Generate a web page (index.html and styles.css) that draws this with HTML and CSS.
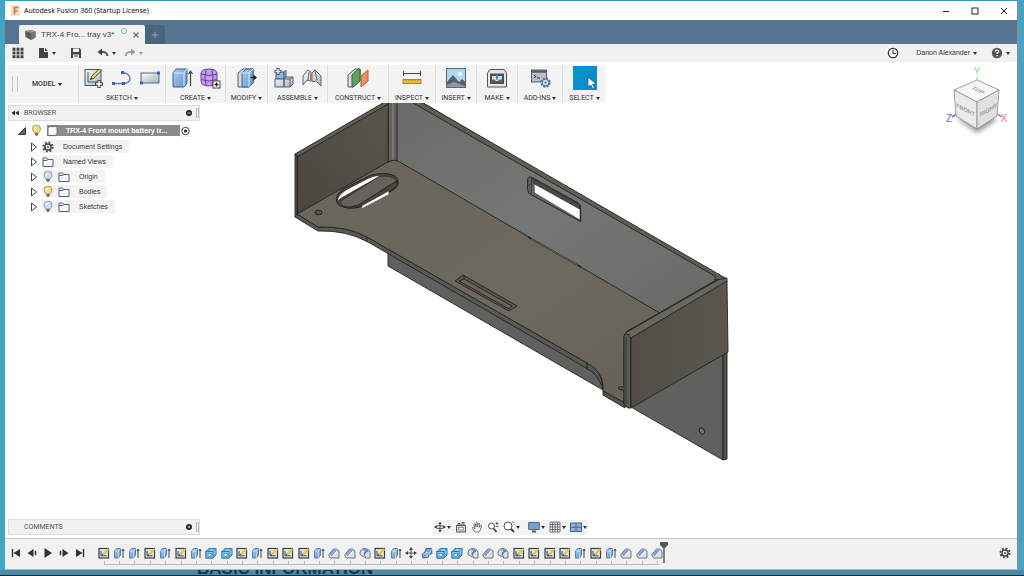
FILE: index.html
```html
<!DOCTYPE html>
<html lang="en">
<head>
<meta charset="utf-8">
<title>Autodesk Fusion 360 (Startup License)</title>
<link rel="stylesheet" href="styles.css">
</head>
<body>
<svg class="defs" aria-hidden="true">
  <defs>
    <linearGradient id="blue" x1="0" y1="0" x2="1" y2="1"><stop offset="0" stop-color="#a9d0f0"/><stop offset="1" stop-color="#6295cb"/></linearGradient>
    <linearGradient id="grey" x1="0" y1="0" x2="1" y2="1"><stop offset="0" stop-color="#fafafa"/><stop offset="1" stop-color="#a9b1bd"/></linearGradient>
    <symbol id="t-sketch" viewBox="0 0 12 12"><rect x="1" y="1.500" width="9.500" height="9.500" fill="#dfe5ee" stroke="#36404f" stroke-width="1.200"/><path d="M3 8.800h5.500M3 8.800V4" stroke="#36404f" fill="none"/><path d="M4.500 7.800 10.500 2" stroke="#e9c53c" stroke-width="2.400"/><path d="m3.800 8.600 1.600-.5-1-1z" fill="#222"/></symbol>
    <symbol id="t-extrude" viewBox="0 0 12 12"><path d="M1.500 4 3.500 1.500H7.500V8L5.500 11h-4z" fill="url(#blue)" stroke="#48688d" stroke-width=".8"/><path d="M1.500 4h4v7M5.500 4l2-2.500" fill="none" stroke="#dcecfa" stroke-width=".7"/><path d="M10 11V2.500M8.800 4 10 2l1.200 2" fill="none" stroke="#444"/></symbol>
    <symbol id="t-shell" viewBox="0 0 12 12"><path d="M4 1.500h7v6.500L8 11H1V4.500z" fill="#8fcdee" stroke="#287da8" stroke-linejoin="round"/><path d="M4 1.500V4M8 8h3M8 4.500l3-3" fill="none" stroke="#287da8" stroke-width=".8"/><rect x="1" y="4.500" width="7" height="6.500" fill="#8fcdee" stroke="#287da8"/><rect x="3" y="6.300" width="3.200" height="3" fill="#f4f9fc" stroke="#287da8" stroke-width=".7"/></symbol>
    <symbol id="t-chamfer" viewBox="0 0 12 12"><path d="M1 7.500 5.500 2q3-1 5.500 2v7H3L1 9.500z" fill="#dde2ea" stroke="#5e6a7a" stroke-width=".9"/><path d="M1.300 7.500 5.800 2.200q2-.4 3.200 1.300L3.800 9.500z" fill="#86a3c9"/><path d="m3.800 9.800 5.200-6" stroke="#fff" stroke-width=".8"/></symbol>
    <symbol id="t-fillet" viewBox="0 0 12 12"><path d="M1 6Q1.500 1.500 6 1.500q4 0 5 4V11H6.500V9.500L5 10 1 7.500z" fill="#dde2ea" stroke="#5e6a7a" stroke-width=".9"/><path d="M3 3.500Q5 1.500 7.500 2.500 9.500 3.500 9.500 5 6.500 4.500 6 9L4.500 8Q4.500 4.500 7 4 5 3 3 3.500z" fill="#5a7fb5"/></symbol>
    <symbol id="t-combine" viewBox="0 0 12 12"><path d="M5 1.500h5.500l.5 5-3 1.500-1 2.500-5 .5L1 7l3-2z" fill="#79a6d8" stroke="#3f628e"/><path d="M4.500 5.500h4L11 2M8.500 5.500V8M1.500 7H6v3.500" fill="none" stroke="#d2e5f8" stroke-width=".7"/></symbol>
    <symbol id="t-move" viewBox="0 0 12 12"><path d="M6 2v8M2 6h8" stroke="#555"/><path d="m6 0 2 3H4zM6 12l2-3H4zM0 6l3-2v4zM12 6 9 4v4z" fill="#444"/></symbol>
    <symbol id="bulb" viewBox="0 0 10 12"><path d="M3 8Q1 6 1 4a4 4 0 0 1 8 0Q9 6 7 8z" fill="currentColor" stroke="#8b8c83" stroke-width=".8"/><path d="M3.500 8.500h3v1h-3zM4 10.500h2" fill="#777" stroke="#666" stroke-width=".8"/><path d="M3 4q0-1.500 1.500-2" fill="none" stroke="#fff"/></symbol>
    <symbol id="folder" viewBox="0 0 12 12"><path d="M1 10.500V2h3.500l1 1.500H11v7zM1 4.500h3.500l1.500-1" fill="#f4f6f9" stroke="#53647c"/></symbol>
    <symbol id="arrow" viewBox="0 0 8 10"><path d="M1.500 1 6.500 5l-5 4z" fill="#fff" stroke="#444"/></symbol>
    <symbol id="gear" viewBox="0 0 12 12"><circle cx="6" cy="6" r="4.600" fill="none" stroke="#444" stroke-width="1.900" stroke-dasharray="1.810 1.800"/><circle cx="6" cy="6" r="3.100" fill="none" stroke="#444" stroke-width="1.500"/><circle cx="6" cy="6" r="1" fill="#444"/></symbol>
  </defs>
</svg>

<div class="window">
  <header class="titlebar">
    <svg class="i12" viewBox="0 0 12 12"><rect x="1" y="0" width="9" height="11" rx="1" fill="#f9e0ca"/><path d="M4.500 9.500V2.500H8.500M4.500 6H7.500" fill="none" stroke="#c47a38" stroke-width="1.600"/></svg>
    <h1>Autodesk Fusion 360 (Startup License)</h1>
    <button class="wbtn" aria-label="Minimize"><svg viewBox="0 0 10 10"><path d="M2 5.500h6" stroke="#222"/></svg></button>
    <button class="wbtn" aria-label="Maximize"><svg viewBox="0 0 10 10"><rect x="2" y="2" width="6" height="6" fill="none" stroke="#222"/></svg></button>
    <button class="wbtn" aria-label="Close"><svg viewBox="0 0 10 10"><path d="m2 2 6 6M8 2 2 8" stroke="#222"/></svg></button>
  </header>

  <nav class="tabs" aria-label="Documents">
    <div class="tab">
      <svg class="i12" viewBox="0 0 12 12"><path d="m1 2 6-1 4.500 1.500v6L7 11 1.500 8z" fill="#5d5d5d"/><path d="m1 2 6-1 4.500 1.500L7 4z" fill="#999"/><path d="M7 4v7l4.500-2.500v-6z" fill="#777"/></svg>
      <span class="tabname">TRX-4 Fro... tray v3*</span>
      <svg class="sync" viewBox="0 0 8 8"><circle cx="4" cy="4" r="2.500" fill="none" stroke="#72c7c0"/></svg>
      <button class="x" aria-label="Close tab"><svg viewBox="0 0 8 8"><path d="m1.500 1.500 5 5M6.500 1.500l-5 5" stroke="#777" stroke-width="1.400"/></svg></button>
    </div>
    <button class="newtab" aria-label="New tab"><svg viewBox="0 0 8 8"><path d="M4 .5v7M.5 4h7" stroke="#8fa1b3"/></svg></button>
  </nav>

  <div class="quick">
    <button aria-label="Data panel"><svg class="i12" viewBox="0 0 12 12"><path d="M.5 2.300h11M.5 6h11M.5 9.700h11" stroke="#444" stroke-width="3" stroke-dasharray="3 1"/></svg></button>
    <button class="caret file" aria-label="File"><svg class="i12" viewBox="0 0 12 12"><path d="M2 1h5v4h4v6H2zM8 1l3 3H8z" fill="#444"/></svg></button>
    <button class="save" aria-label="Save"><svg class="i12" viewBox="0 0 12 12"><path d="M1 1h8.500L11 2.500V11H1z" fill="#444"/><path d="M3 1.500h6v3.500H3zM3 7.500h6V11H3z" fill="#f1f1f1"/><path d="M4 9h4" stroke="#444"/></svg></button>
    <button class="caret undo" aria-label="Undo"><svg class="i12" viewBox="0 0 12 12"><path d="M3 5q7-1 7.500 4" fill="none" stroke="#444" stroke-width="1.800"/><path d="M.5 5 5 1.500v7z" fill="#444"/></svg></button>
    <button class="caret redo" aria-label="Redo"><svg class="i12" viewBox="0 0 12 12"><path d="M9 5Q2 4 1.500 9" fill="none" stroke="#999" stroke-width="1.800"/><path d="M11.500 5 7 1.500v7z" fill="#999"/></svg></button>
    <span class="grow"></span>
    <button class="clock" aria-label="Job status"><svg class="i12" viewBox="0 0 12 12"><circle cx="6" cy="6" r="4.700" fill="none" stroke="#333" stroke-width="1.200"/><path d="M6 3v3.500h2.800" fill="none" stroke="#333"/></svg></button>
    <button class="caret user">Danon Alexander</button>
    <button class="caret help" aria-label="Help"><svg class="i12" viewBox="0 0 12 12"><circle cx="6" cy="6" r="5.200" fill="#555"/><path d="M4.300 4.700Q4.300 3 6 3t1.700 1.500Q7.700 5.500 6 6v1M6 8v1.200" fill="none" stroke="#fff" stroke-width="1.200"/></svg></button>
  </div>

  <main class="stage">
    <svg class="model" viewBox="288 100 448 368" role="img" aria-label="Battery tray model">
      <defs>
        <linearGradient id="wall" x1="0" y1="0" x2="1" y2="1"><stop offset="0" stop-color="#6a6b67"/><stop offset=".5" stop-color="#747874"/><stop offset="1" stop-color="#676a65"/></linearGradient>
        <linearGradient id="floor" x1="0" y1="0" x2="1" y2="1"><stop offset="0" stop-color="#69655b"/><stop offset=".6" stop-color="#6e695e"/><stop offset="1" stop-color="#666157"/></linearGradient>
        <linearGradient id="side" x1="0" y1="1" x2="1" y2="0"><stop offset="0" stop-color="#494640"/><stop offset="1" stop-color="#5a564d"/></linearGradient>
        <linearGradient id="side2" x1="0" y1="0" x2="1" y2="0"><stop offset="0" stop-color="#514e47"/><stop offset="1" stop-color="#59574f"/></linearGradient>
      </defs>
      <g stroke="#23231f" stroke-width=".9" stroke-linejoin="round">
        <path d="M388 250v16l215 124v-15z" fill="#5f615d"/>
        <path d="m631 407 92-53v106z" fill="#5f615c"/>
        <path d="m723 355 4-3v107l-4 1z" fill="#50514d"/>
        <path d="M388 100h30L716 276v5l-56 33L388 162z" fill="url(#wall)"/>
        <path d="M408 100h10L727 279l-12 1q2-3-2-5z" fill="#625d54"/>
        <path d="M388 100h9v61l-4-1-5 2z" fill="#62615b"/>
        <path d="M393 100v60" stroke="#777770" stroke-width="2"/>
        <path d="m297 155 91-53v60l-91 53z" fill="url(#side)"/>
        <path d="m295 154 93-54v4l-91 53z" fill="#625f57"/>
        <path d="M295 154l2 1v60l-2 2z" fill="#5a5b57"/>
        <path d="m295 217 2-3 21 13q29-1 49 10l220 126 1 6-220-127q-22-12-50-11z" fill="#595a56"/>
        <path d="m297 214 91-52q6-3 10-1l262 152-33 18-3 5v67l-21-12v-5q-1-15-16-23L367 237q-20-11-49-10z" fill="url(#floor)"/>
        <path d="M587 363v6q9 3 16 19-1-18-16-25z" fill="#555650"/>
        <path d="m603 391 22 12v5l-22-13z" fill="#55554f"/>
        <path d="M367 237v5" fill="none"/>
        <path d="m624 335 4-4 88-51 11-2v4l-96 56z" fill="#69665e"/>
        <path d="m627 332 91-52" fill="none"/>
        <path d="M624 336q1-3 4-2l3 4v70h-3l-4-3z" fill="#595954"/>
        <path d="M626 337v70" fill="none" stroke-width=".5"/>
        <path d="m631 338 96-57 1 71-97 56z" fill="url(#side2)"/>
        <path d="m463 275 54 31-8 5-54-30z" fill="#5b574e"/>
        <path d="m464 279 48 27-3 3-50-28zM464 275v4" fill="#69645a"/>
        <path d="m528 237 53 30" fill="none" stroke-width="1.500"/>
        <path d="m531 238.500 47 27" stroke="#777970" stroke-width=".8"/>
        <ellipse cx="318.500" cy="212.500" rx="3.500" ry="2.300" fill="#57534b"/>
        <path d="M624 387q-6-1-6 1t6 2" fill="#57534b"/>
        <ellipse cx="702" cy="431" rx="2.300" ry="3.300" transform="rotate(-25 702 431)" fill="#71746f"/>
      </g>
      <g transform="translate(280 95) scale(.3333)" stroke="#23231f" stroke-width="3" stroke-linejoin="round">
        <path d="M170 320q-5-20 20-38l75-38c25-12 80-12 87 8q10 20-16 35l-85 44c-28 15-73 10-81-11z" fill="#47453f"/>
        <path d="M180 320l116-75q40-6 54 12l-115 73-25 6q-25 0-30-16z" fill="#68635a" stroke-width="2"/>
        <path d="M174 316q0-14 26-31l65-34q15-8 34-9l-17 10-99 56z" fill="#fff" stroke="none"/>
        <path d="m214 336 26-8 112-70v14l-20 15-84 44q-20 8-34 5z" fill="#484741" stroke-width="2"/>
        <path d="m246 333 80-44v9l-79 41z" fill="#fff" stroke="none"/>
      </g>
      <g transform="translate(500 160) scale(.3333)" stroke="#23231f" stroke-width="3" stroke-linejoin="round">
        <path d="M83 58q3-12 14-5l138 76q7 4 7 14v42L92 103q-9-3-9-14z" fill="#62655f"/>
        <path d="M97 56 240 135v13L103 72z" fill="#484a46" stroke-width="1.500"/>
        <path d="M103 72 240 148v32L103 98z" fill="#fff" stroke-width="1.500"/>
        <path d="M94 54v47M83 77l11-5" fill="none" stroke-width="2"/>
      </g>
    </svg>

    <svg class="cube" viewBox="944 64 68 76" role="img" aria-label="View cube">
      <defs><filter id="soft"><feGaussianBlur stdDeviation="2.500"/></filter></defs>
      <path d="m958 119 19 14 20-13-20-15z" fill="#999" filter="url(#soft)"/>
      <path d="M977 81v-4" stroke="#7dd87d"/><path d="m957 114-5 3" stroke="#6670cc" stroke-width="1.500"/><path d="m997 114 5 3" stroke="#e08080" stroke-width="1.500"/>
      <g stroke="#8c8c8c" stroke-width=".8" stroke-linejoin="round"><path d="m954 90 23-10 22 10-22 12z" fill="#f6f6f6"/><path d="m954 90 23 12v27l-21-13z" fill="#ebebeb"/><path d="m977 102 22-12-2 26-20 13z" fill="#e0e0e0"/></g>
      <g class="cubetext" text-anchor="middle"><text transform="matrix(.9 .45 -.9 .45 976 91)">TOP</text><text transform="matrix(.9 .45 0 1 965.500 112)">FRONT</text><text transform="matrix(.9 -.5 0 1 988.500 112)">RIGHT</text></g>
      <g class="axis" text-anchor="middle"><text x="977" y="75" fill="#8bdc8b">Y</text><text x="949" y="122" fill="#6068c8">Z</text><text x="1004" y="122" fill="#e07878">X</text></g>
    </svg>

    <div class="toolbar" role="toolbar" aria-label="Model tools">
      <div class="modelsel"><button class="caret">MODEL</button></div>
      <div class="group w-sketch"><div class="icons">
        <svg class="i22" viewBox="0 0 22 22"><rect x="2" y="2.500" width="16" height="16" fill="url(#grey)" stroke="#4c5869"/><path d="M5 5v10h9" fill="none" stroke="#4c5869"/><path d="m9 11 8-8" stroke="#5b5223" stroke-width="3.600"/><path d="m9 11 8-8" stroke="#f3d660" stroke-width="2.200"/><path d="m7 13 1-3 2 2z" fill="#222"/><path d="M16 13v8M12 17h8" stroke="#444" stroke-width="3.400"/><path d="M16 14v6M13 17h6" stroke="#fff" stroke-width="1.600"/></svg>
        <svg class="i22" viewBox="0 0 22 22"><path d="M2 16.500h11M13 16.500q6-1 6-5 0-5-8-6" fill="none" stroke="#657ba0" stroke-width="1.400"/><path d="M1 15h3v3H1zM11 15h3v3h-3zM10 4h3v3h-3z" fill="#3d60c0"/></svg>
        <svg class="i22" viewBox="0 0 22 22"><rect x="2" y="6" width="18" height="10" fill="url(#grey)" stroke="#5d6c80"/><path d="M1 14.500h3v3H1zM18 4.500h3v3h-3z" fill="#3d60c0"/></svg>
      </div><button class="caret">SKETCH</button></div>
      <div class="group w-mid"><div class="icons">
        <svg class="i22" viewBox="0 0 22 22"><path d="m2 6 3-4h11v14l-3 4H2z" fill="url(#blue)" stroke="#3f6185"/><path d="M2.500 6H13v13.500M13 6l3-4" fill="none" stroke="#d9ecfb"/><path d="M19.500 19V5M17.500 7l2-3 2 3" fill="none" stroke="#444" stroke-width="1.200"/></svg>
        <svg class="i22" viewBox="0 0 22 22"><path d="M2 6q1-4 8-4 8 0 8 5v6q0 6-8 6-8 0-8-5z" fill="#c39be8" stroke="#6c3da0"/><path d="M7 2.500Q5 10 7 18.500M13 2.500q2 7 0 16M2 7q8 3 16 0M2 12.500q8 3 16 0" fill="none" stroke="#6c3da0"/><rect x="14" y="14" width="7" height="7" fill="#fff" stroke="#444"/><path d="M15.500 17.500h4M17.500 15.500v4" stroke="#222" stroke-width="1.400"/></svg>
      </div><button class="caret">CREATE</button></div>
      <div class="group w-mod"><div class="icons">
        <svg class="i22" viewBox="0 0 22 22"><path d="m2 6 5-4h10v14l-4 4H2z" fill="#d8dde5" stroke="#4e6076"/><path d="m6 6 4-4h7v14l-4 4H6z" fill="url(#blue)" stroke="#3f6185"/><path d="M6 6h7v14M13 6l4-4" fill="none" stroke="#d9ecfb"/><path d="M14.500 10.500h5" stroke="#222" stroke-width="1.500"/><path d="m21 10.500-3.500-3v6z" fill="#222"/></svg>
      </div><button class="caret">MODIFY</button></div>
      <div class="group w-mid"><div class="icons">
        <svg class="i22" viewBox="0 0 22 22"><path d="M3 5h8v7H3z" fill="#8db8e2" stroke="#48688d"/><path d="m11 5 2-2v8l-2 1z" fill="#7faedd" stroke="#48688d"/><path d="M2 12h9v8H2zM11 12l2-2h7v7l-3 3h-6z" fill="url(#grey)" stroke="#4e6076"/><path d="M11 12h6v8M17 12l3-2" fill="none" stroke="#4e6076"/><path d="M5 1v7M1.500 4.500h7" stroke="#446" stroke-width="3"/><path d="M5 2v5M2.500 4.500h5" stroke="#fff" stroke-width="1.400"/></svg>
        <svg class="i22" viewBox="0 0 22 22"><path d="M2 18V9l5-6 3 2v9l-4-1zM20 19V9l-6-6-3 3v9l4-1z" fill="url(#grey)" stroke="#596779"/><path d="m8 5-1 8M14 4l2 9" stroke="#596779"/><path d="M10 7v7" stroke="#d96342" stroke-width="1.600"/></svg>
      </div><button class="caret">ASSEMBLE</button></div>
      <div class="group w-con"><div class="icons">
        <svg class="i22" viewBox="0 0 22 22"><path d="M1 20V8l7-6h5v12l-7 6z" fill="#d7dfdc" stroke="#4e6076"/><path d="M5 20V8l6-6h2v12l-7 6z" fill="#5ca45f" stroke="#31653a"/><path d="M14 20V9l7-6v11z" fill="#ed9362" stroke="#b45c35"/></svg>
      </div><button class="caret">CONSTRUCT</button></div>
      <div class="group w-ins"><div class="icons">
        <svg class="i22" viewBox="0 0 22 22"><path d="M2 6.500h18M2.500 4v5M19.500 4v5" stroke="#444"/><rect x="2" y="12.500" width="18" height="4" fill="#e8b83f" stroke="#b08420"/><path d="M5 13v1M8 13v1M11 13v1M14 13v1M17 13v1" stroke="#8c6510" stroke-width=".7"/></svg>
      </div><button class="caret">INSPECT</button></div>
      <div class="group w-small"><div class="icons">
        <svg class="i22" viewBox="0 0 22 22"><rect x="1.500" y="1.500" width="19" height="19" fill="#b0d5ef" stroke="#586675"/><circle cx="15" cy="7" r="2" fill="#fff"/><path d="M2 15 8 8l6 7 3-3 3.500 3v5H2z" fill="#58606b"/><path d="m2 18 7-3 11 4v1H2z" fill="#8e98a3"/></svg>
      </div><button class="caret">INSERT</button></div>
      <div class="group w-small"><div class="icons">
        <svg class="i22" viewBox="0 0 22 22"><path d="M1.500 6 4 2.500h14L20.500 6v14h-19z" fill="#e6e6e6" stroke="#555"/><path d="M4 6.500h14v10.500H4z" fill="#4d5053"/><path d="M6 9h10v6H6z" fill="#cfdce4"/><path d="M6 15v-2.500h2.500L10 14h2l1.500-1.500H16V15z" fill="#5e646a"/><path d="M11 7.500v5" stroke="#338cc5" stroke-width="2"/></svg>
      </div><button class="caret">MAKE</button></div>
      <div class="group w-add"><div class="icons">
        <svg class="i22" viewBox="0 0 22 22"><rect x="2.500" y="3" width="15" height="12" fill="#b8bfca" stroke="#555f6c"/><path d="M2.500 4.500h15" stroke="#555f6c" stroke-width="2.500"/><path d="m5 8 2 1.500L5 11M8 11h3" fill="none" stroke="#333"/><circle cx="16.500" cy="15.500" r="4.200" fill="#dce5f3" stroke="#4f6996" stroke-width="2" stroke-dasharray="2 1.300"/><circle cx="16.500" cy="15.500" r="3.400" fill="#cfdbee" stroke="#4f6996"/><circle cx="16.500" cy="15.500" r="1" fill="#4f6996"/></svg>
      </div><button class="caret">ADD-INS</button></div>
      <div class="group w-sel"><div class="icons">
        <svg class="select" viewBox="0 0 24 24"><path d="M0 0h24v24H0z" fill="#078fd2"/><path d="M2 4h14v8H2z" fill="none" stroke="#209596"/><path d="m15 11 8 7-3.500.3 2 3.200-2 1-1.700-3.500L15 21z" fill="#fff" stroke="#35586d" stroke-width=".8"/></svg>
      </div><button class="caret">SELECT</button></div>
    </div>

    <section class="browser">
      <div class="panelhead"><svg viewBox="0 0 8 8"><path d="M4 1.500v5L.5 4zM7.800 1.500v5L4.300 4z" fill="#222"/></svg><h2>BROWSER</h2><button class="dot" aria-label="Collapse browser"><svg viewBox="0 0 8 8"><circle cx="4" cy="4" r="3" fill="#222"/><path d="M2.500 4h3" stroke="#ccc"/></svg></button><i class="grip"></i></div>
      <ul class="tree">
        <li class="root"><svg class="tri" viewBox="0 0 8 8"><path d="M7.500.5v7h-7z" fill="#666" stroke="#333"/></svg><svg class="i12 on" aria-hidden="true"><use href="#bulb"/></svg><span class="rootname"><svg class="i12" viewBox="0 0 12 12"><path d="m1 3 2-2h8v8l-2 2H1z" fill="#eee" stroke="#666"/><path d="M3 3h6v6H3z" fill="#fff"/></svg><b>TRX-4 Front mount battery tr...</b></span><svg class="i12 active" viewBox="0 0 12 12"><circle cx="6" cy="6" r="4" fill="#fff" stroke="#333"/><circle cx="6" cy="6" r="1.700" fill="#222"/></svg></li>
        <li><svg class="arr"><use href="#arrow"/></svg><span class="node"><svg class="i12"><use href="#gear"/></svg><span>Document Settings</span></span></li>
        <li><svg class="arr"><use href="#arrow"/></svg><span class="node"><svg class="i12"><use href="#folder"/></svg><span>Named Views</span></span></li>
        <li><svg class="arr"><use href="#arrow"/></svg><span class="node"><svg class="i12 off"><use href="#bulb"/></svg><svg class="i12"><use href="#folder"/></svg><span>Origin</span></span></li>
        <li><svg class="arr"><use href="#arrow"/></svg><span class="node"><svg class="i12 on"><use href="#bulb"/></svg><svg class="i12"><use href="#folder"/></svg><span>Bodies</span></span></li>
        <li><svg class="arr"><use href="#arrow"/></svg><span class="node"><svg class="i12 off"><use href="#bulb"/></svg><svg class="i12"><use href="#folder"/></svg><span>Sketches</span></span></li>
      </ul>
    </section>

    <div class="bottomrow">
      <div class="panelhead comments"><h2>COMMENTS</h2><button class="dot" aria-label="Add comment"><svg viewBox="0 0 8 8"><circle cx="4" cy="4" r="3" fill="#222"/><path d="M2.800 4h2.400M4 2.800v2.400" stroke="#ccc"/></svg></button><i class="grip"></i></div>
      <div class="navbar" role="toolbar" aria-label="Navigation">
        <button class="caret" aria-label="Orbit"><svg class="i12" viewBox="0 0 12 12"><path d="M6 2v8.500" stroke="#444"/><path d="M1 6q5 3.500 10 0M1.500 5.500q4.500-2 9 0" fill="none" stroke="#444" stroke-width=".9"/><path d="m6 .5 1.700 2.500H4.300zM6 11.500 7.700 9H4.300zM0 6l3-1.800v3.500zM12 6 9 4.200v3.500z" fill="#444"/></svg></button>
        <button aria-label="Look at"><svg class="i12" viewBox="0 0 12 12"><path d="M1.500 4.500h9V11h-9zM3 4V2.500h2V4M7 4V1.500h2V4" fill="#ddd" stroke="#555"/><path d="M3.500 6.500h5V9h-5z" fill="#fff" stroke="#666" stroke-width=".7"/></svg></button>
        <button aria-label="Pan"><svg class="i12" viewBox="0 0 12 12"><path d="M4 11 1.500 7.500Q1 6 2.500 6.500L4 8 3 3.500q0-1.500 1.200-.5L5 6V2q.7-1.500 1.400 0v4L7.500 2.500q1-1 1.200.3L8.300 6.500l1.300-2q1.200-.5 1 .8L9 9.500 8 11z" fill="#fff" stroke="#555" stroke-width=".8"/></svg></button>
        <button aria-label="Zoom"><svg class="i12" viewBox="0 0 12 12"><circle cx="4.500" cy="5" r="3" fill="#fff" stroke="#555"/><path d="m6.500 7.500 3 3.500" stroke="#444" stroke-width="1.800"/><path d="M8.500 2.500h3M10 1v3M8.500 5.500h3" stroke="#444" stroke-width=".8"/></svg></button>
        <button class="caret" aria-label="Fit"><svg class="i12" viewBox="0 0 12 12"><circle cx="5" cy="5" r="4" fill="#fff" stroke="#555"/><path d="m8 8 3 3" stroke="#444" stroke-width="2"/><path d="M9 1h2v4" fill="none" stroke="#777" stroke-dasharray="1"/></svg></button>
        <button class="caret gap" aria-label="Display settings"><svg class="i12" viewBox="0 0 12 12"><path d="M.7 1.500h10.600v7H.7z" fill="#7e9fc9" stroke="#536780"/><path d="M4 10.500h4" stroke="#555" stroke-width="2"/></svg></button>
        <button class="caret" aria-label="Grid"><svg class="i12" viewBox="0 0 12 12"><path d="M1 1h10v10H1zM3.500 1v10M6 1v10M8.500 1v10M1 3.500h10M1 6h10M1 8.500h10" fill="#eee" stroke="#59606c" stroke-width=".8"/></svg></button>
        <button class="caret" aria-label="Viewports"><svg class="i12" viewBox="0 0 12 12"><path d="M.5 2h11v8.500H.5zM6 2v8.500M.5 6.200h11" fill="#91b1dc" stroke="#445f87"/></svg></button>
      </div>
    </div>
  </main>

  <footer class="timeline">
    <div class="play">
      <button aria-label="First"><svg viewBox="0 0 10 10"><path d="M1.500 1v8" stroke="#333" stroke-width="1.400"/><path d="M9 1v8L2.500 5z" fill="#333"/></svg></button>
      <button aria-label="Step back"><svg viewBox="0 0 10 10"><path d="M6.500 1v8L.5 5z" fill="#333"/><path d="M8.500 3v4" stroke="#333" stroke-width="1.500"/></svg></button>
      <button aria-label="Play"><svg viewBox="0 0 10 10"><path d="M1.500 0v10l7.500-5z" fill="#333"/></svg></button>
      <button aria-label="Step forward"><svg viewBox="0 0 10 10"><path d="M3.500 1v8l6-4z" fill="#333"/><path d="M1.500 3v4" stroke="#333" stroke-width="1.500"/></svg></button>
      <button aria-label="Last"><svg viewBox="0 0 10 10"><path d="M8.500 1v8" stroke="#333" stroke-width="1.400"/><path d="M1 1v8l6.500-4z" fill="#333"/></svg></button>
    </div>
    <ol class="features" id="features"></ol>
    <svg class="marker" viewBox="0 0 8 22"><path d="M0 0h8v3L5 6H3L0 3z" fill="#555"/><path d="M4 5v16" stroke="#555" stroke-width="1.400"/></svg>
    <span class="grow"></span>
    <button class="settings" aria-label="Timeline settings"><svg class="i12"><use href="#gear"/></svg></button>
  </footer>
</div>
<div class="behind"><span>BASIC INFORMATION</span></div>
<script src="timeline.js"></script>
</body>
</html>
```

FILE: timeline.js
```js
const features = [
  'sketch', 'extrude', 'extrude', 'sketch', 'extrude', 'sketch', 'extrude',
  'shell', 'shell', 'sketch', 'extrude', 'sketch', 'sketch', 'sketch',
  'extrude', 'chamfer', 'chamfer', 'fillet', 'sketch', 'extrude', 'move',
  'combine', 'shell', 'shell', 'fillet', 'chamfer', 'fillet', 'sketch',
  'sketch', 'sketch', 'sketch', 'extrude', 'sketch', 'extrude', 'chamfer',
  'chamfer', 'chamfer'
];
document.getElementById('features').innerHTML = features
  .map(kind => `<li><svg class="i12" role="img" aria-label="${kind}"><use href="#t-${kind}"/></svg></li>`)
  .join('');
```

FILE: styles.css
```css
* { box-sizing: border-box; }
body {
  margin: 0;
  height: 100vh;
  display: flex;
  flex-direction: column;
  overflow: hidden;
  background: #43a5c1;
  color: #333;
  font: 7px/10px Roboto, "Liberation Sans", sans-serif;
}
button {
  display: flex;
  align-items: center;
  gap: 2px;
  margin: 0;
  padding: 0;
  border: 0;
  background: none;
  color: inherit;
  font: inherit;
}
svg { display: block; flex: none; overflow: visible; }
h1, h2, ul, ol { margin: 0; padding: 0; font: inherit; list-style: none; }
.defs { position: absolute; width: 0; height: 0; }
.i12 { width: 12px; height: 12px; }
.i22 { width: 22px; height: 22px; }
.grow { flex: 1; }
.caret::after {
  content: "";
  border: 2px solid transparent;
  border-top: 3px solid #333;
  border-bottom: 0;
}

.window {
  flex: 1;
  min-height: 0;
  display: flex;
  flex-direction: column;
  margin: 0 5px;
  border-top: 1px solid #379bb8;
  border-right: 2px solid #7294ad;
  border-bottom: 1px solid #9dbdcd;
  background: #fff;
}
.titlebar {
  display: flex;
  align-items: center;
  height: 19px;
  padding: 0 0 0 5px;
  gap: 2px;
}
.titlebar h1 { flex: 1; color: #111; font: 7px/12px "Noto Sans", "Open Sans", sans-serif; }
.wbtn { justify-content: center; width: 27px; }
.wbtn svg { width: 10px; height: 10px; }

.tabs {
  display: flex;
  align-items: flex-end;
  height: 24px;
  padding-left: 14px;
  background: #56738f;
}
.tab {
  display: flex;
  align-items: center;
  width: 126px;
  height: 19px;
  padding: 0 5px;
  border-radius: 2px 2px 0 0;
  background: #f1f1f1;
}
.tabname { margin-left: 5px; color: #444; font: 8px/12px "Liberation Sans", sans-serif; white-space: nowrap; flex: 1; }
.sync { width: 8px; height: 8px; margin: 0 4px 8px 0; }
.x svg, .newtab svg { width: 8px; height: 8px; }
.newtab { justify-content: center; width: 20px; height: 19px; background: #4a647c; border-radius: 0 2px 0 0; }

.quick {
  display: flex;
  align-items: center;
  height: 18px;
  padding: 0 7px;
  background: #f1f1f1;
}
.quick .caret { gap: 3px; }
.file { margin-left: 13px; }
.save { margin-left: 14px; }
.undo { margin-left: 15px; }
.redo { margin-left: 8px; }
.redo::after { border-top-color: #999; }
.user { margin: 0 14px 0 17px; font-family: "Liberation Sans", sans-serif; }

.stage {
  position: relative;
  flex: 1;
  min-height: 0;
  display: flex;
  flex-direction: column;
  align-items: flex-start;
  padding: 3px;
}
.model { position: absolute; left: 283px; top: 38px; width: 448px; height: 368px; }
.cube { position: absolute; right: 5px; top: 2px; width: 68px; height: 76px; }
.cubetext { font: bold 6px "Liberation Sans", sans-serif; fill: #999; }
.axis { font: 10px "Liberation Sans", sans-serif; }

.toolbar {
  position: relative;
  display: flex;
  height: 38px;
  background: #f3f3f3;
}
.modelsel {
  display: flex;
  align-items: center;
  width: 70px;
  padding-left: 4px;
}
.modelsel::before {
  content: "";
  width: 4px;
  height: 16px;
  margin-right: 14px;
  border: 1px solid #ccc;
  border-width: 0 1px;
}
.modelsel button { font-weight: 500; gap: 3px; }
.group {
  display: flex;
  flex-direction: column;
  align-items: center;
  justify-content: space-between;
  border-left: 1px solid #ddd;
}
.icons { display: flex; gap: 6px; height: 26px; align-items: center; }
.select { width: 24px; height: 24px; }
.w-sketch { width: 87px; }
.w-mid { width: 60px; }
.w-mod { width: 42px; }
.w-con { width: 61px; }
.w-ins { width: 47px; }
.w-small { width: 41px; }
.w-add { width: 45px; }
.w-sel { width: 44px; }

.browser { margin-top: 2px; font-family: "Liberation Sans", sans-serif; }
.panelhead {
  display: flex;
  align-items: center;
  width: 192px;
  height: 16px;
  padding-left: 2px;
  border: 1px solid #ddd;
  background: #f1f1f1;
  font-family: Roboto, sans-serif;
}
.panelhead svg { width: 8px; height: 8px; }
.panelhead h2 { flex: 1; margin-left: 5px; color: #555; }
.comments h2 { margin-left: 13px; }
.grip { width: 3px; height: 10px; margin-left: 3px; border: 1px solid #bbb; border-width: 0 1px; }
.tree { padding-top: 1px; }
.tree li { display: flex; align-items: center; height: 15px; margin-left: 22px; }
.tree .root { height: 17px; margin-left: 10px; gap: 5px; }
.tri { width: 8px; height: 8px; }
.arr { width: 8px; height: 10px; margin-right: 4px; }
.rootname { display: flex; align-items: center; gap: 8px; width: 133px; height: 11px; background: #8b8b8b; color: #fff; }
.root .i12 { width: 11px; }
.root .active { margin-left: -5px; background: #f3f3f3; }
.node { display: flex; align-items: center; gap: 4px; height: 13px; padding: 0 7px 0 0; background: #f3f3f3; }
.node > span { margin-left: 5px; }
.on { color: #f4dd78; }
.off { color: #cbdff4; }

.bottomrow { display: flex; align-items: center; margin-top: auto; }
.navbar {
  display: flex;
  align-items: center;
  gap: 4px;
  height: 15px;
  margin-left: 233px;
  padding: 0 1px;
  background: #f3f3f3;
}
.navbar .caret { gap: 1px; }
.navbar .gap { margin-left: 4px; }

.timeline {
  display: flex;
  align-items: center;
  height: 31px;
  padding: 0 6px 2px;
  border-top: 1px solid #c8c8c8;
  background: #f1f1f1;
}
.play { display: flex; gap: 6px; }
.play svg { width: 10px; height: 10px; }
.features { display: flex; width: 569px; margin-left: 11px; }
.features li {
  position: relative;
  flex: 1;
  display: flex;
  justify-content: center;
  height: 12px;
}
.features li::before {
  content: "";
  position: absolute;
  left: 50%;
  top: 14px;
  width: 100%;
  height: 3px;
  border-left: 1px solid #bbb;
  border-bottom: 1px solid #bbb;
}
.features li:last-child::before { width: 1px; }
.marker { width: 8px; height: 22px; margin-left: -5px; }

.behind {
  display: flex;
  align-items: flex-end;
  height: 6px;
  padding-left: 197px;
  border-bottom: 1px solid #082b38;
  background: #4a8ba2;
  overflow: hidden;
  color: #17394a;
  font: bold 17px/12px "Liberation Sans", sans-serif;
}
```
